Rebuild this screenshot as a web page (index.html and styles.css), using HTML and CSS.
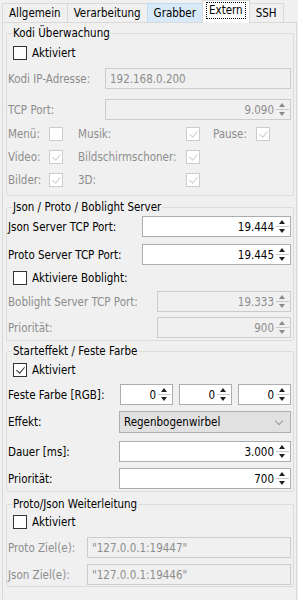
FILE: index.html
```html
<!DOCTYPE html>
<html lang="de">
<head>
    <meta charset="UTF-8">
    <meta name="viewport" content="width=device-width, initial-scale=1.0">
    <title>Extern</title>
    <link rel="stylesheet" href="styles.css">
</head>
<body>
    <div class="tab-widget">
        <div class="tab-bar">
            <div class="tab">Allgemein</div>
            <div class="tab">Verarbeitung</div>
            <div class="tab tab-hover">Grabber</div>
            <div class="tab tab-active"><span class="focus">Extern</span></div>
            <div class="tab">SSH</div>
        </div>
        <div class="tab-pane">

            <fieldset class="group group-kodi">
                <legend>Kodi Überwachung</legend>
                <label class="check-row r-kodi-check">
                    <span class="checkbox"></span>Aktiviert
                </label>
                <div class="row r-kodi-ip">
                    <span class="label disabled">Kodi IP-Adresse:</span>
                    <span class="field text disabled">192.168.0.200</span>
                </div>
                <div class="row r-kodi-port">
                    <span class="label disabled">TCP Port:</span>
                    <span class="field spin disabled">9.090<span class="arrows"></span></span>
                </div>
                <div class="flags r-flag1">
                    <span class="disabled">Menü:</span><span class="checkbox small off"></span>
                    <span class="disabled">Musik:</span><span class="checkbox small on"></span>
                    <span class="disabled">Pause:</span><span class="checkbox small on"></span>
                </div>
                <div class="flags r-flag2">
                    <span class="disabled">Video:</span><span class="checkbox small on"></span>
                    <span class="disabled">Bildschirmschoner:</span><span class="checkbox small on"></span>
                </div>
                <div class="flags r-flag3">
                    <span class="disabled">Bilder:</span><span class="checkbox small on"></span>
                    <span class="disabled">3D:</span><span class="checkbox small on"></span>
                </div>
            </fieldset>

            <fieldset class="group group-server">
                <legend>Json / Proto / Boblight Server</legend>
                <div class="row r-json">
                    <span class="label">Json Server TCP Port:</span>
                    <span class="field spin">19.444<span class="arrows"></span></span>
                </div>
                <div class="row r-proto">
                    <span class="label">Proto Server TCP Port:</span>
                    <span class="field spin">19.445<span class="arrows"></span></span>
                </div>
                <label class="check-row r-bob-check">
                    <span class="checkbox"></span>Aktiviere Boblight:
                </label>
                <div class="row r-bob-port">
                    <span class="label disabled">Boblight Server TCP Port:</span>
                    <span class="field spin disabled">19.333<span class="arrows"></span></span>
                </div>
                <div class="row r-bob-prio">
                    <span class="label disabled">Priorität:</span>
                    <span class="field spin disabled">900<span class="arrows"></span></span>
                </div>
            </fieldset>

            <fieldset class="group group-effect">
                <legend>Starteffekt / Feste Farbe</legend>
                <label class="check-row r-eff-check">
                    <span class="checkbox checked"></span>Aktiviert
                </label>
                <div class="row r-rgb">
                    <span class="label">Feste Farbe [RGB]:</span>
                    <div class="rgb">
                        <span class="field spin">0<span class="arrows"></span></span>
                        <span class="field spin">0<span class="arrows"></span></span>
                        <span class="field spin">0<span class="arrows"></span></span>
                    </div>
                </div>
                <div class="row r-effekt">
                    <span class="label">Effekt:</span>
                    <span class="field combo">Regenbogenwirbel<span class="chevron"></span></span>
                </div>
                <div class="row r-dauer">
                    <span class="label">Dauer [ms]:</span>
                    <span class="field spin">3.000<span class="arrows"></span></span>
                </div>
                <div class="row r-prio">
                    <span class="label">Priorität:</span>
                    <span class="field spin">700<span class="arrows"></span></span>
                </div>
            </fieldset>

            <fieldset class="group group-forward">
                <legend>Proto/Json Weiterleitung</legend>
                <label class="check-row r-fwd-check">
                    <span class="checkbox"></span>Aktiviert
                </label>
                <div class="row r-fwd-proto">
                    <span class="label disabled">Proto Ziel(e):</span>
                    <span class="field text disabled">"127.0.0.1:19447"</span>
                </div>
                <div class="row r-fwd-json">
                    <span class="label disabled">Json Ziel(e):</span>
                    <span class="field text disabled">"127.0.0.1:19446"</span>
                </div>
            </fieldset>

        </div>
    </div>
</body>
</html>
```

FILE: styles.css
```css
body {
    margin: 0;
    background-color: #f0f0f0;
    font-family: "DejaVu Sans Condensed", "DejaVu Sans", sans-serif;
    font-size: 11.5px;
    color: #000;
}
.tab-widget {
    margin: 0 1px 0 2px;
}
.tab-bar {
    display: flex;
    align-items: flex-end;
    height: 22px;
    position: relative;
    z-index: 1;
}
.tab {
    height: 19px;
    line-height: 18px;
    padding: 0 6px;
    border: 1px solid #d9d9d9;
    border-bottom: none;
    margin-right: -1px;
    background-color: #f0f0f0;
    box-sizing: border-box;
}
.tab-hover {
    background-color: #d8eaf9;
    border-color: #c0dcf3;
}
.tab-active {
    height: 23px;
    margin-bottom: -1px;
    background-color: #fff;
    border-color: #d9d9d9;
    padding: 1px 3px 0;
    position: relative;
}
.tab-active .focus {
    display: block;
    border: 1px dotted #000;
    line-height: 15px;
    padding: 0 2px;
}
.tab-pane {
    border: 1px solid #d9d9d9;
    height: 580px;
    padding-top: 3px;
}
.group {
    margin: 0 2px 0 3px;
    padding: 0 2px 0 1px;
    border: 1px solid #dcdcdc;
    border-radius: 2px;
}
.group legend {
    padding: 0 1px;
    margin-left: 4px;
    line-height: 14px;
}
.group-kodi { padding-bottom: 5px; }
.group-server { margin-top: 4px; padding-bottom: 2px; }
.group-effect { margin-top: 3px; padding-bottom: 2px; }
.group-forward { margin-top: 5px; padding-bottom: 1px; }

.row {
    display: flex;
    align-items: center;
    height: 21px;
}
.label {
    flex: none;
}
.disabled {
    color: #8d8d8d;
}
.check-row {
    display: flex;
    align-items: center;
    height: 20px;
    padding-left: 5px;
}
.check-row .checkbox {
    margin-right: 5px;
}
.checkbox {
    display: inline-block;
    width: 14px;
    height: 14px;
    border: 1px solid #333;
    background-color: #fff;
    box-sizing: border-box;
    position: relative;
}
.checkbox.checked::after,
.checkbox.on::after {
    content: "";
    position: absolute;
    left: 4px;
    top: 1px;
    width: 4px;
    height: 7px;
    border: solid #333;
    border-width: 0 1px 1px 0;
    transform: rotate(40deg);
}
.checkbox.small {
    border-color: #cccccc;
}
.checkbox.on::after {
    border-color: #cfcfcf;
}

.field {
    display: flex;
    align-items: center;
    height: 21px;
    box-sizing: border-box;
    border: 1px solid #adadad;
    background-color: #fff;
    padding: 0 4px;
    margin-left: auto;
    position: relative;
}
.field.disabled {
    background-color: #f0f0f0;
    border-color: #cccccc;
}
.spin {
    justify-content: flex-end;
    padding-right: 16px;
}
.arrows {
    position: absolute;
    right: 1px;
    top: 1px;
    bottom: 1px;
    width: 13px;
    background:
        linear-gradient(to bottom, transparent 8px, #c8c8c8 8px, #c8c8c8 9px, transparent 9px);
}
.arrows::before,
.arrows::after {
    content: "";
    position: absolute;
    left: 3px;
    border-left: 3.5px solid transparent;
    border-right: 3.5px solid transparent;
}
.arrows::before {
    top: 2px;
    border-bottom: 4px solid #202020;
}
.arrows::after {
    bottom: 2px;
    border-top: 4px solid #202020;
}
.disabled .arrows::before { border-bottom-color: #8a8a8a; }
.disabled .arrows::after { border-top-color: #8a8a8a; }

.combo {
    height: 22px;
    background-color: #e1e1e1;
    border-color: #adadad;
    padding-left: 4px;
}
.chevron {
    position: absolute;
    right: 8px;
    top: 6px;
    width: 5px;
    height: 5px;
    border: solid #9a9a9a;
    border-width: 0 1px 1px 0;
    transform: rotate(45deg);
}

/* Kodi */
.r-kodi-check { margin-top: 3px; }
.r-kodi-ip { margin-top: 5px; }
.r-kodi-port { margin-top: 10px; }
.r-kodi-ip .field, .r-kodi-port .field { width: 186px; }
.flags {
    display: grid;
    grid-template-columns: 41px 29px 108px 27px 43px auto;
    align-items: center;
    height: 20px;
}
.r-flag1 { margin-top: 4px; }
.r-flag2, .r-flag3 { margin-top: 3px; }

/* Server */
.r-json { margin-top: 2px; }
.r-proto { margin-top: 7px; }
.r-json .field, .r-proto .field { width: 149px; }
.r-bob-check { margin-top: 3px; }
.r-bob-port { margin-top: 3px; }
.r-bob-prio { margin-top: 5px; }
.r-bob-port .field, .r-bob-prio .field { width: 134px; }

/* Starteffekt */
.r-eff-check { margin-top: 2px; }
.r-rgb { margin-top: 4px; }
.rgb {
    display: flex;
    gap: 6px;
    margin-left: auto;
}
.rgb .field { width: 53px; }
.r-effekt { margin-top: 6px; height: 22px; }
.r-dauer { margin-top: 8px; }
.r-prio { margin-top: 6px; }
.r-effekt .field, .r-dauer .field, .r-prio .field { width: 172px; }

/* Weiterleitung */
.r-fwd-check { margin-top: 1px; }
.r-fwd-proto { margin-top: 5px; }
.r-fwd-json { margin-top: 6px; }
.r-fwd-proto .field, .r-fwd-json .field { width: 204px; }
```
